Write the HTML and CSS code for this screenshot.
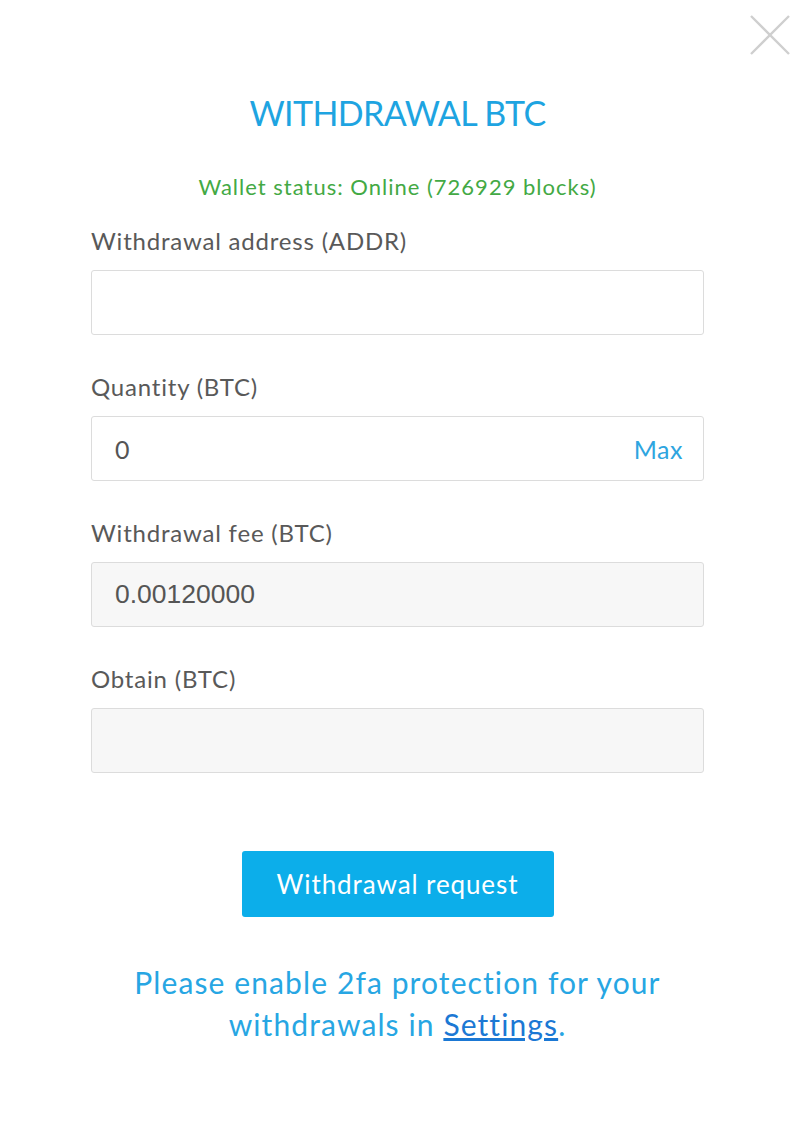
FILE: index.html
```html
<!DOCTYPE html>
<html lang="en">
<head>
<meta charset="utf-8">
<title>Withdrawal BTC</title>
<link rel="stylesheet" href="styles.css">
</head>
<body>
<div class="modal">
  <button class="close" aria-label="Close">
    <svg width="40" height="40" viewBox="0 0 40 40"><path d="M1 1 L39 39 M39 1 L1 39" stroke="#cfcfcf" stroke-width="2.4" fill="none"/></svg>
  </button>
  <h1 class="title">WITHDRAWAL BTC</h1>
  <div class="status">Wallet status: Online (726929 blocks)</div>
  <form class="form">
    <div class="field">
      <label class="label">Withdrawal address (ADDR)</label>
      <div class="input"></div>
    </div>
    <div class="field">
      <label class="label">Quantity (BTC)</label>
      <div class="input"><span class="value">0</span><span class="max">Max</span></div>
    </div>
    <div class="field">
      <label class="label">Withdrawal fee (BTC)</label>
      <div class="input readonly"><span class="value mono">0.00120000</span></div>
    </div>
    <div class="field">
      <label class="label">Obtain (BTC)</label>
      <div class="input readonly"></div>
    </div>
    <div class="actions">
      <button type="button" class="submit">Withdrawal request</button>
    </div>
    <p class="notice">Please enable 2fa protection for your withdrawals in <a href="#" class="link">Settings</a>.</p>
  </form>
</div>
</body>
</html>
```
FILE: styles.css
```css
html, body {
  margin: 0;
  padding: 0;
  background: #fff;
}
body {
  font-family: Lato, "Open Sans", sans-serif;
  color: #555;
}
.modal {
  position: relative;
  width: 800px;
  height: 1141px;
  box-sizing: border-box;
  padding: 93px 96px 0 91px;
}
.close {
  position: absolute;
  top: 15px;
  left: 750px;
  width: 40px;
  height: 40px;
  padding: 0;
  border: 0;
  background: none;
}
.close svg { display: block; }
.title {
  margin: 0;
  font-weight: 400;
  font-size: 34px;
  line-height: 40px;
  letter-spacing: -0.6px;
  color: #1ea4e1;
  text-align: center;
}
.status {
  margin-top: 39px;
  font-size: 22px;
  line-height: 30px;
  letter-spacing: 1px;
  color: #43a944;
  text-align: center;
}
.form {
  margin: 24px 0 0;
  display: flex;
  flex-direction: column;
  gap: 37px;
}
.field {
  display: flex;
  flex-direction: column;
  gap: 14px;
}
.label {
  font-size: 24px;
  line-height: 30px;
  letter-spacing: 0.8px;
  color: #595959;
}
.input {
  height: 65px;
  box-sizing: border-box;
  border: 1px solid #dcdcdc;
  border-radius: 3px;
  background: #fff;
  display: flex;
  align-items: center;
  justify-content: space-between;
  padding: 0 20px 0 23px;
}
.input.readonly {
  background: #f7f7f7;
}
.value {
  font-size: 25px;
  color: #555;
}
.value.mono {
  font-family: "Liberation Sans", Arial, sans-serif;
  font-size: 26.5px;
  color: #555;
}
.max {
  font-size: 25px;
  letter-spacing: 0.5px;
  color: #2ea5e0;
}
.actions {
  display: flex;
  justify-content: center;
  margin-top: 41px;
}
.submit {
  width: 312px;
  height: 66px;
  border: 0;
  border-radius: 3px;
  background: #0caeea;
  color: #fff;
  font-family: Lato, "Open Sans", sans-serif;
  font-size: 26px;
  letter-spacing: 0.9px;
}
.notice {
  margin: 7px 0 0;
  font-size: 30px;
  line-height: 42px;
  letter-spacing: 1.1px;
  color: #27a6e3;
  text-align: center;
}
.link {
  color: #1b78d4;
  text-decoration: underline;
}
```
